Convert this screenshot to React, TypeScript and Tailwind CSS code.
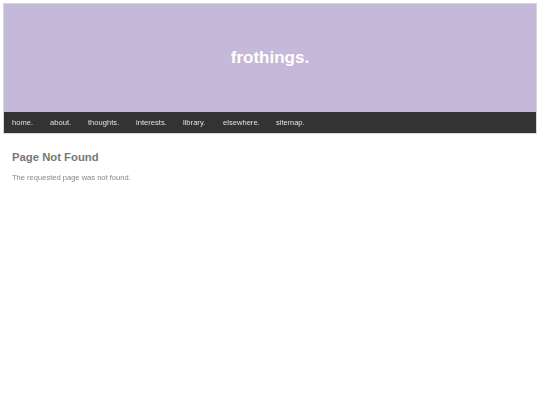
export default function App() {
  const links = ["home.", "about.", "thoughts.", "interests.", "library.", "elsewhere.", "sitemap."];
  return (
    <div className="min-h-[405px] bg-white antialiased" style={{ fontFamily: '"Liberation Sans", Arial, sans-serif' }}>
      <div className="mx-[3px] pt-[3px]">
        <div className="border border-[#d8d8d8]">
          <div className="h-[108px] bg-[#c5b9d9] flex items-center justify-center">
            <h1 className="text-[17px] font-bold text-white">frothings.</h1>
          </div>
          <nav className="h-[21px] bg-[#333333] flex items-center pl-[4px]">
            {links.map((l) => (
              <span key={l} className="text-[7.6px] text-[#e0e0e0] px-[4px] mr-[8.8px] [will-change:transform]">{l}</span>
            ))}
          </nav>
        </div>
        <div className="px-[9px] pt-[15px]">
          <h2 className="text-[11.3px] font-bold text-[#777777]">Page Not Found</h2>
          <p className="text-[7.55px] text-[#888888] mt-[6px] [will-change:transform]">The requested page was not found.</p>
        </div>
      </div>
    </div>
  );
}
